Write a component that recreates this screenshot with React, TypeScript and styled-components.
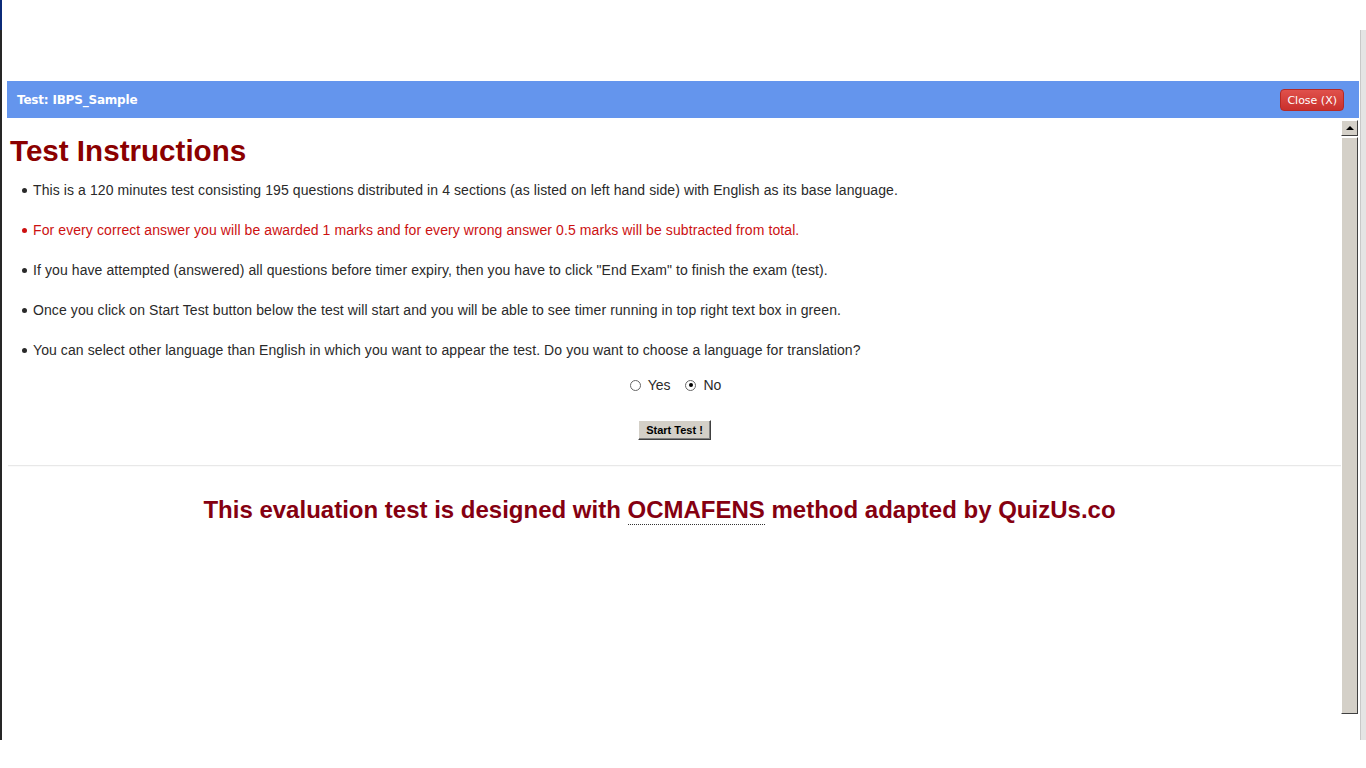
import React, { useState } from 'react'
import styled, { createGlobalStyle } from 'styled-components'

const GlobalStyle = createGlobalStyle`
  html, body {
    margin: 0;
    padding: 0;
    background: #ffffff;
    overflow: hidden;
  }
  body {
    font-family: Arial, "Liberation Sans", sans-serif;
  }
`

const Screen = styled.div`
  width: 1366px;
  height: 768px;
  display: flex;
  background: #ffffff;
  overflow: hidden;
`

const LeftEdge = styled.div`
  width: 2px;
  display: flex;
  flex-direction: column;
  flex-shrink: 0;
`

const EdgePart = styled.div<{ $h: number; $c: string }>`
  height: ${({ $h }) => $h}px;
  background: ${({ $c }) => $c};
`

const Main = styled.div`
  flex: 1;
  display: flex;
  flex-direction: column;
  padding: 81px 0 0 5px;
`

const RightEdge = styled.div`
  width: 5px;
  flex-shrink: 0;
  margin-top: 30px;
  height: 710px;
  background: #e4e4e4;
  border-left: 1px solid #c8c8c8;
`

const Dialog = styled.div`
  width: 1352px;
  display: flex;
  flex-direction: column;
`

const TitleBar = styled.div`
  height: 37px;
  background: #6495ed;
  display: flex;
  align-items: center;
  justify-content: space-between;
  padding: 0 15px 0 10px;
`

const Title = styled.span`
  color: #ffffff;
  font-family: "DejaVu Sans", Verdana, sans-serif;
  font-size: 12px;
  font-weight: bold;
  letter-spacing: -0.2px;
`

const CloseButton = styled.button`
  height: 22px;
  padding: 0 6px;
  border: 1px solid #b52a25;
  border-radius: 4px;
  background: linear-gradient(#e0514b, #c9302c);
  color: #ffffff;
  font-family: "DejaVu Sans", Verdana, sans-serif;
  font-size: 11px;
  cursor: pointer;
  margin-top: 1px;
`

const Body = styled.div`
  height: 597px;
  display: flex;
  padding-top: 1px;
`

const Content = styled.div`
  flex: 1;
  padding: 0 0 0 3px;
`

const Heading = styled.h1`
  margin: 14px 0 0;
  font-family: Arial, "Liberation Sans", sans-serif;
  font-size: 29.6px;
  line-height: 36px;
  font-weight: bold;
  color: #8b0000;
`

const List = styled.ul`
  margin: 11px 0 0;
  padding: 0 0 0 23px;
  list-style: none;
`

const Item = styled.li<{ $red?: boolean }>`
  position: relative;
  font-size: 14px;
  letter-spacing: 0.09px;
  line-height: 20px;
  margin-bottom: 20px;
  color: ${({ $red }) => ($red ? '#cc1111' : '#2a2a2a')};

  &::before {
    content: '';
    position: absolute;
    left: -11px;
    top: 8px;
    width: 5px;
    height: 5px;
    border-radius: 50%;
    background: currentColor;
  }

  &:last-child {
    margin-bottom: 0;
  }
`

const Choices = styled.div`
  display: flex;
  justify-content: center;
  gap: 15px;
  margin: 17px 0 0 0;
  font-size: 14px;
  color: #2a2a2a;
`

const Choice = styled.label`
  display: flex;
  align-items: center;
  gap: 7px;
  cursor: pointer;
`

const RadioDot = styled.span<{ $on: boolean }>`
  width: 9px;
  height: 9px;
  border-radius: 50%;
  border: 1px solid #666666;
  background: #ffffff;
  display: inline-flex;
  align-items: center;
  justify-content: center;

  &::after {
    content: '';
    width: 4px;
    height: 4px;
    border-radius: 50%;
    background: ${({ $on }) => ($on ? '#000000' : 'transparent')};
  }
`

const StartRow = styled.div`
  display: flex;
  justify-content: center;
  margin: 27px 0 0 -2px;
`

const StartButton = styled.button`
  height: 20px;
  padding: 0 7px;
  background: #d4d0c8;
  border: 1px solid;
  border-color: #ffffff #404040 #404040 #ffffff;
  box-shadow: inset -1px -1px 0 #808080;
  font-family: "Liberation Sans", Tahoma, sans-serif;
  font-size: 11px;
  font-weight: bold;
  color: #000000;
  cursor: pointer;
`

const Divider = styled.hr`
  margin: 25px 0 0 -2px;
  border: 0;
  border-top: 1px solid #e8e8e8;
  border-bottom: 1px solid #fafafa;
`

const Footer = styled.p`
  margin: 29px 0 0;
  text-align: center;
  font-size: 24px;
  font-weight: bold;
  color: #850011;
  padding-right: 32px;
`

const Abbr = styled.span`
  border-bottom: 1px dotted #333333;
  padding-bottom: 1px;
`

const Scrollbar = styled.div`
  width: 17px;
  margin-right: 1px;
  display: flex;
  flex-direction: column;
  padding-top: 1px;
`

const ArrowButton = styled.div`
  height: 14px;
  background: #d4d0c8;
  border: 1px solid;
  border-color: #ffffff #404040 #404040 #ffffff;
  display: flex;
  align-items: center;
  justify-content: center;

  &::after {
    content: '';
    border-left: 4px solid transparent;
    border-right: 4px solid transparent;
    border-bottom: 4px solid #000000;
  }
`

const Thumb = styled.div`
  height: 575px;
  margin-top: 1px;
  background: #d4d0c8;
  border: 1px solid;
  border-color: #ffffff #404040 #404040 #ffffff;
`

const items = [
  { text: 'This is a 120 minutes test consisting 195 questions distributed in 4 sections (as listed on left hand side) with English as its base language.' },
  { text: 'For every correct answer you will be awarded 1 marks and for every wrong answer 0.5 marks will be subtracted from total.', red: true },
  { text: 'If you have attempted (answered) all questions before timer expiry, then you have to click "End Exam" to finish the exam (test).' },
  { text: 'Once you click on Start Test button below the test will start and you will be able to see timer running in top right text box in green.' },
  { text: 'You can select other language than English in which you want to appear the test. Do you want to choose a language for translation?' },
]

export default function App() {
  const [translate, setTranslate] = useState(false)

  return (
    <>
      <GlobalStyle />
      <Screen>
        <LeftEdge>
          <EdgePart $h={30} $c="#0b2a78" />
          <EdgePart $h={710} $c="#262626" />
        </LeftEdge>

        <Main>
          <Dialog>
            <TitleBar>
              <Title>Test: IBPS_Sample</Title>
              <CloseButton>Close (X)</CloseButton>
            </TitleBar>

            <Body>
              <Content>
                <Heading>Test Instructions</Heading>

                <List>
                  {items.map((item) => (
                    <Item key={item.text} $red={item.red}>
                      {item.text}
                    </Item>
                  ))}
                </List>

                <Choices>
                  <Choice onClick={() => setTranslate(true)}>
                    <RadioDot $on={translate} />
                    Yes
                  </Choice>
                  <Choice onClick={() => setTranslate(false)}>
                    <RadioDot $on={!translate} />
                    No
                  </Choice>
                </Choices>

                <StartRow>
                  <StartButton>Start Test !</StartButton>
                </StartRow>

                <Divider />

                <Footer>
                  This evaluation test is designed with <Abbr>OCMAFENS</Abbr> method adapted by QuizUs.co
                </Footer>
              </Content>

              <Scrollbar>
                <ArrowButton />
                <Thumb />
              </Scrollbar>
            </Body>
          </Dialog>
        </Main>

        <RightEdge />
      </Screen>
    </>
  )
}
